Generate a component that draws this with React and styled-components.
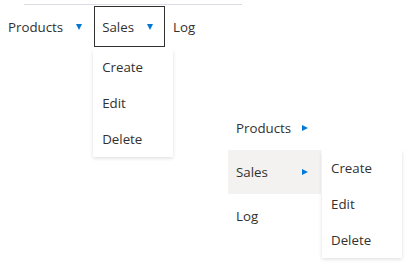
import React from 'react'
import styled, { createGlobalStyle } from 'styled-components'

const GlobalStyle = createGlobalStyle`
  body {
    margin: 0;
    background: #ffffff;
    font-family: "Open Sans", "Noto Sans", sans-serif;
    font-size: 13.3px;
    color: #323130;
  }
`

const Page = styled.div`
  width: 411px;
  height: 267px;
  overflow: hidden;
`

const Divider = styled.div`
  margin: 4px 0 0 24px;
  width: 218px;
  height: 1px;
  background: #dadde1;
`

const MenuBar = styled.div`
  display: flex;
  margin-top: 1px;
  height: 41px;
`

const BarItem = styled.div`
  position: relative;
  display: flex;
  align-items: center;
  padding: 0 ${props => props.caret ? '12px' : '8px'} 0 8px;
  box-shadow: ${props => props.focused ? 'inset 0 0 0 1px #323130' : 'none'};
`

const Label = styled.span`
  line-height: 20px;
`

const CaretDown = styled.span`
  width: 0;
  height: 0;
  margin-left: 13px;
  border-left: 3.5px solid transparent;
  border-right: 3.5px solid transparent;
  border-top: 6px solid #0078d4;
`

const CaretRight = styled.span`
  width: 0;
  height: 0;
  border-top: 3.5px solid transparent;
  border-bottom: 3.5px solid transparent;
  border-left: 6px solid #0078d4;
`

const Dropdown = styled.div`
  position: absolute;
  top: ${props => props.top}px;
  left: ${props => props.left}px;
  width: 80px;
  background: #ffffff;
  box-shadow: 0 1.6px 3.6px rgba(0,0,0,0.13), 0 0.3px 0.9px rgba(0,0,0,0.11);
  z-index: 2;
`

const DropItem = styled.div`
  height: 36px;
  display: flex;
  align-items: center;
  padding-left: 9px;
`

const VerticalMenu = styled.div`
  margin: 59px 0 0 228px;
  width: 93px;
`

const VRow = styled.div`
  position: relative;
  height: 44px;
  display: flex;
  align-items: center;
  justify-content: space-between;
  padding: 0 13px 0 8px;
  background: ${props => props.active ? '#f3f2f1' : 'transparent'};
`

const items = ['Create', 'Edit', 'Delete']

const SubMenu = ({ top, left }) => (
  <Dropdown top={top} left={left}>
    {items.map(i => <DropItem key={i}>{i}</DropItem>)}
  </Dropdown>
)

const App = () => (
  <Page>
    <GlobalStyle />
    <Divider />
    <MenuBar>
      <BarItem caret>
        <Label>Products</Label>
        <CaretDown />
      </BarItem>
      <BarItem caret focused>
        <Label>Sales</Label>
        <CaretDown />
        <SubMenu top={43} left={-1} />
      </BarItem>
      <BarItem>
        <Label>Log</Label>
      </BarItem>
    </MenuBar>
    <VerticalMenu>
      <VRow>
        <Label>Products</Label>
        <CaretRight />
      </VRow>
      <VRow active>
        <Label>Sales</Label>
        <CaretRight />
        <SubMenu top={0} left={94} />
      </VRow>
      <VRow>
        <Label>Log</Label>
      </VRow>
    </VerticalMenu>
  </Page>
)

export default App
